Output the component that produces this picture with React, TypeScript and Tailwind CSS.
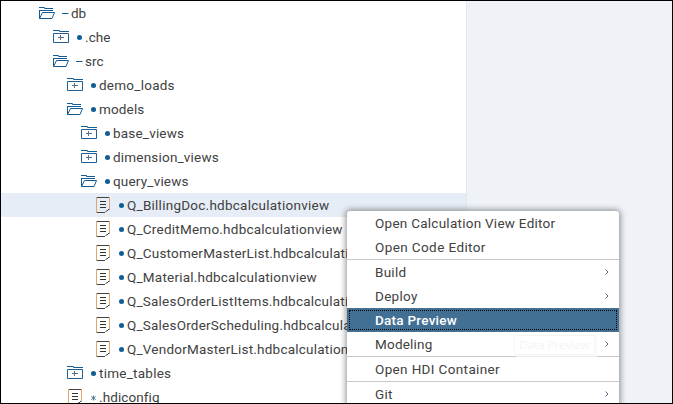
import React from "react";

type Kind = "open" | "closed" | "file";
type Row = { kind: Kind; mark: "dash" | "dot" | "star"; label: string; pad: string; tracking: string; selected?: boolean };

const file = "pl-[95px]";
const rows: Row[] = [
  { kind: "open", mark: "dash", label: "db", pad: "pl-[38px]", tracking: "tracking-[0px]" },
  { kind: "closed", mark: "dot", label: ".che", pad: "pl-[52px]", tracking: "tracking-[0.1px]" },
  { kind: "open", mark: "dash", label: "src", pad: "pl-[52px]", tracking: "tracking-[0px]" },
  { kind: "closed", mark: "dot", label: "demo_loads", pad: "pl-[66px]", tracking: "tracking-[0.25px]" },
  { kind: "open", mark: "dot", label: "models", pad: "pl-[66px]", tracking: "tracking-[0.15px]" },
  { kind: "closed", mark: "dot", label: "base_views", pad: "pl-[80px]", tracking: "tracking-[0.2px]" },
  { kind: "closed", mark: "dot", label: "dimension_views", pad: "pl-[80px]", tracking: "tracking-[0.2px]" },
  { kind: "open", mark: "dot", label: "query_views", pad: "pl-[80px]", tracking: "tracking-[0.2px]" },
  { kind: "file", mark: "dot", label: "Q_BillingDoc.hdbcalculationview", pad: file, tracking: "tracking-[0.25px]", selected: true },
  { kind: "file", mark: "dot", label: "Q_CreditMemo.hdbcalculationview", pad: file, tracking: "tracking-[0.23px]" },
  { kind: "file", mark: "dot", label: "Q_CustomerMasterList.hdbcalculationview", pad: file, tracking: "tracking-[0.2px]" },
  { kind: "file", mark: "dot", label: "Q_Material.hdbcalculationview", pad: file, tracking: "tracking-[0.22px]" },
  { kind: "file", mark: "dot", label: "Q_SalesOrderListItems.hdbcalculationview", pad: file, tracking: "tracking-[0.22px]" },
  { kind: "file", mark: "dot", label: "Q_SalesOrderScheduling.hdbcalculationview", pad: file, tracking: "tracking-[0.22px]" },
  { kind: "file", mark: "dot", label: "Q_VendorMasterList.hdbcalculationview", pad: file, tracking: "tracking-[0.22px]" },
  { kind: "closed", mark: "dot", label: "time_tables", pad: "pl-[66px]", tracking: "tracking-[0.25px]" },
  { kind: "file", mark: "star", label: ".hdiconfig", pad: "pl-[67px]", tracking: "tracking-[0.1px]" },
];

function Icon({ kind }: { kind: Kind }) {
  if (kind === "file")
    return (
      <svg width="16" height="24" viewBox="0 0 16 24" fill="none" className="shrink-0">
        <path d="M.5 4V20M13.5 4V16" stroke="#e3a56a" />
        <path d="M1 4.5H13M1 19.5H9M9.5 18.5H10.5M10.5 17.5H12M12 16.5H13.5" stroke="#444" />
        <path d="M4 8.5H10M4 11.5H10M4 14.5H10" stroke="#333" />
      </svg>
    );
  if (kind === "closed")
    return (
      <svg width="16" height="24" viewBox="0 0 16 24" fill="none" className="shrink-0">
        <path d="M0 5.5H6.5V6.5H16" stroke="#145b91" />
        <path d="M.5 8.5H15.5V17.5H.5Z" stroke="#245f93" />
        <path d="M5 12.5H11M7.5 10V15" stroke="#55718f" />
      </svg>
    );
  return (
    <svg width="16" height="24" viewBox="0 0 16 24" fill="none" className="shrink-0">
      <path d="M0 6.5H5.5V7.5H14M0 9.5H14M.5 9V17.5M.5 17.5L3.5 11.5H15.5L13 17.5H.5" stroke="#145b91" />
    </svg>
  );
}

function Mark({ mark }: { mark: Row["mark"] }) {
  return (
    <svg width="8" height="24" viewBox="0 0 8 24" className="shrink-0">
      {mark === "dot" && <circle cx="4.5" cy="12.6" r="2.5" fill="#0f5d94" />}
      {mark === "dash" && <path d="M1 12.5H7.5" stroke="#0f5d94" />}
      {mark === "star" && <path d="M4.5 10.5V15.5M2.3 11.5L6.7 14.5M6.7 11.5L2.3 14.5" stroke="#547995" />}
    </svg>
  );
}

function MenuItem({ label, tracking, arrow, active }: { label: string; tracking: string; arrow?: boolean; active?: boolean }) {
  return (
    <div className={`relative flex h-6 shrink-0 items-center justify-between pr-[10px] pl-7 ${active ? "bg-[#427095] text-white" : ""}`}>
      <span className={`whitespace-nowrap leading-6 ${tracking} ${active ? "font-medium" : ""}`}>{label}</span>
      {arrow && (
        <svg width="4" height="8" viewBox="0 0 4 8" fill="none">
          <path d="M.5 1.5L3 4L.5 6.5" stroke="#715a87" />
        </svg>
      )}
      {active && <span className="absolute inset-x-[2px] inset-y-[2px] border border-dotted border-black" />}
    </div>
  );
}

function Separator() {
  return <div className="h-px shrink-0 bg-[#c8c8c8]" />;
}

export default function App() {
  return (
    <div className="relative flex h-[404px] w-[673px] overflow-hidden border border-black bg-white font-['Roboto',sans-serif] text-[13.5px] text-[#414141]">
      <div className="w-[465px] shrink-0 overflow-hidden">
        {rows.map((r) => (
          <div key={r.label} className={`flex h-6 items-center ${r.pad} ${r.selected ? "bg-[#e6edf6]" : ""}`}>
            <Icon kind={r.kind} />
            <span className={r.kind === "file" ? "w-[5px] shrink-0" : "w-[6px] shrink-0"} />
            <Mark mark={r.mark} />
            <span className={`ml-[2px] whitespace-nowrap leading-6 ${r.tracking}`}>{r.label}</span>
          </div>
        ))}
      </div>
      <div className="flex-1 border-l border-[#e3e8ee] bg-[#eff3f8]" />
      <div className="absolute top-[210px] left-[346px] flex w-[272px] flex-col rounded-t-[3px] bg-white shadow-[0_0_6px_1px_rgba(0,0,0,0.45)]">
        <MenuItem label="Open Calculation View Editor" tracking="tracking-[0.26px]" />
        <MenuItem label="Open Code Editor" tracking="tracking-[0.4px]" />
        <Separator />
        <MenuItem label="Build" tracking="tracking-[0.25px]" arrow />
        <MenuItem label="Deploy" tracking="tracking-[0.3px]" arrow />
        <MenuItem label="Data Preview" tracking="tracking-[0.25px]" active />
        <MenuItem label="Modeling" tracking="tracking-[0.2px]" arrow />
        <Separator />
        <MenuItem label="Open HDI Container" tracking="tracking-[0.36px]" />
        <Separator />
        <MenuItem label="Git" tracking="tracking-[0.25px]" arrow />
        <div className="absolute top-[124px] left-[167px] flex h-5 w-[81px] items-center justify-center border border-[#f5f5f5] bg-white font-['Open_Sans',sans-serif] text-[11.5px] text-[#f4f4f4] shadow-[2px_2px_2px_#fafafa]">
          Data Preview
        </div>
      </div>
    </div>
  );
}
